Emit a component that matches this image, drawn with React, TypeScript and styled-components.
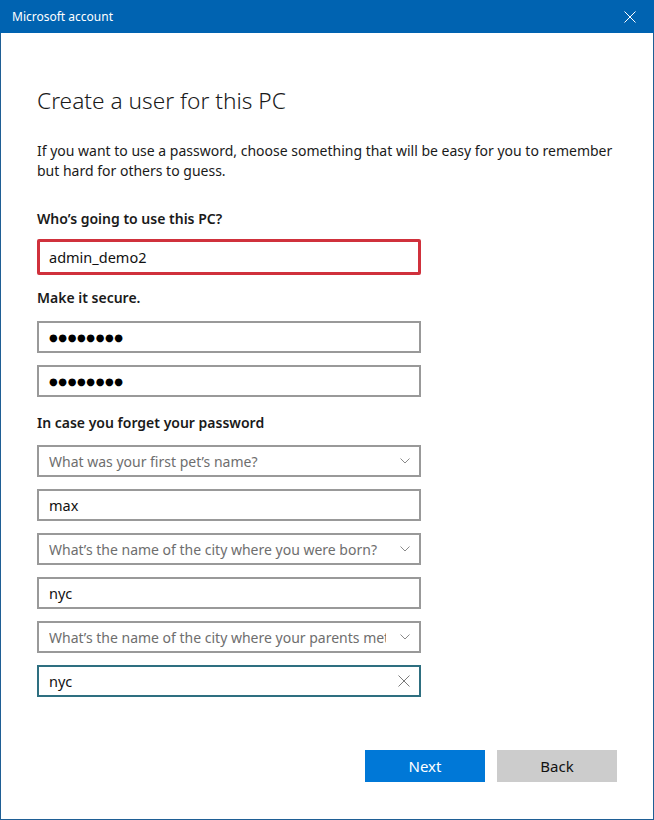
import React from "react";
import styled, { createGlobalStyle } from "styled-components";

const GlobalStyle = createGlobalStyle`
  * { box-sizing: border-box; }
  body {
    margin: 0;
    background: #ffffff;
    font-family: "Noto Sans", "Open Sans", sans-serif;
  }
`;

const Window = styled.div`
  width: 654px;
  height: 820px;
  display: flex;
  flex-direction: column;
  background: #ffffff;
  border: 1px solid #1f5f95;
  border-top: none;
`;

const TitleBar = styled.div`
  height: 33px;
  margin: 0 -1px;
  display: flex;
  align-items: center;
  justify-content: space-between;
  padding: 0 18px 0 12px;
  background: #0063b1;
  color: #ffffff;
  font-size: 12px;
`;

const CloseIcon = styled.svg`
  width: 12px;
  height: 12px;
`;

const Content = styled.div`
  flex: 1;
  display: flex;
  flex-direction: column;
  padding: 52px 36px 0 36px;
`;

const Heading = styled.h1`
  margin: 0;
  font-size: 22.7px;
  line-height: 32px;
  font-weight: 300;
  color: #1a1a1a;
`;

const Intro = styled.p`
  margin: 24px 0 0;
  width: 590px;
  font-size: 14px;
  line-height: 20px;
  color: #1a1a1a;
`;

const Label = styled.div<{ $top: number }>`
  margin-top: ${(p) => p.$top}px;
  font-size: 14px;
  line-height: 20px;
  font-weight: 600;
  color: #1a1a1a;
`;

const FieldGroup = styled.div<{ $top: number }>`
  margin-top: ${(p) => p.$top}px;
  display: flex;
  flex-direction: column;
  gap: 12px;
  width: 384px;
`;

const Field = styled.div<{ $variant?: "highlight" | "focus" }>`
  height: ${(p) => (p.$variant === "highlight" ? 36 : 32)}px;
  display: flex;
  align-items: center;
  justify-content: space-between;
  padding: 0 ${(p) => (p.$variant === "highlight" ? 10 : 9)}px 0
    ${(p) => (p.$variant === "highlight" ? 9 : 10)}px;
  border: ${(p) =>
    p.$variant === "highlight"
      ? "3px solid #d0313c"
      : p.$variant === "focus"
      ? "2px solid #2e6f80"
      : "2px solid #999999"};
  border-radius: ${(p) => (p.$variant === "highlight" ? "2px" : "0")};
  font-size: 14.5px;
  color: #111111;
  background: #ffffff;
`;

const Placeholder = styled.span`
  font-size: 14px;
  color: #6e6e6e;
  white-space: nowrap;
  overflow: hidden;
  flex: 1;
`;

const Dots = styled.span`
  font-family: "DejaVu Sans", sans-serif;
  font-size: 10px;
  letter-spacing: 0.6px;
  color: #000000;
`;

const Chevron = styled.svg`
  width: 10px;
  height: 6px;
  margin-left: 14px;
  flex-shrink: 0;
`;

const ClearIcon = styled.svg`
  width: 12px;
  height: 12px;
`;

const Actions = styled.div`
  margin-top: 53px;
  display: flex;
  justify-content: flex-end;
  gap: 12px;
`;

const Button = styled.button<{ $primary?: boolean }>`
  width: 120px;
  height: 32px;
  border: none;
  padding: 0;
  font-family: inherit;
  font-size: 15px;
  background: ${(p) => (p.$primary ? "#0078d7" : "#cccccc")};
  color: ${(p) => (p.$primary ? "#ffffff" : "#111111")};
`;

const ChevronDown = () => (
  <Chevron viewBox="0 0 10 6">
    <path d="M0.5 0.5 L5 5 L9.5 0.5" fill="none" stroke="#8a8a8a" strokeWidth="1" />
  </Chevron>
);

const Select = ({ text }: { text: string }) => (
  <Field>
    <Placeholder>{text}</Placeholder>
    <ChevronDown />
  </Field>
);

export default function App() {
  return (
    <>
      <GlobalStyle />
      <Window>
        <TitleBar>
          <span>Microsoft account</span>
          <CloseIcon viewBox="0 0 12 12">
            <path d="M0.5 0.5 L11.5 11.5 M11.5 0.5 L0.5 11.5" stroke="#ffffff" strokeWidth="1" />
          </CloseIcon>
        </TitleBar>
        <Content>
          <Heading>Create a user for this PC</Heading>
          <Intro>
            If you want to use a password, choose something that will be easy for you to remember
            but hard for others to guess.
          </Intro>
          <Label $top={28}>Who’s going to use this PC?</Label>
          <FieldGroup $top={10}>
            <Field $variant="highlight">admin_demo2</Field>
          </FieldGroup>
          <Label $top={13}>Make it secure.</Label>
          <FieldGroup $top={13}>
            <Field>
              <Dots>●●●●●●●●</Dots>
            </Field>
            <Field>
              <Dots>●●●●●●●●</Dots>
            </Field>
          </FieldGroup>
          <Label $top={16}>In case you forget your password</Label>
          <FieldGroup $top={12}>
            <Select text="What was your first pet’s name?" />
            <Field>max</Field>
            <Select text="What’s the name of the city where you were born?" />
            <Field>nyc</Field>
            <Select text="What’s the name of the city where your parents met?" />
            <Field $variant="focus">
              <span>nyc</span>
              <ClearIcon viewBox="0 0 12 12">
                <path d="M0.5 0.5 L11.5 11.5 M11.5 0.5 L0.5 11.5" stroke="#7a7a7a" strokeWidth="1" />
              </ClearIcon>
            </Field>
          </FieldGroup>
          <Actions>
            <Button $primary>Next</Button>
            <Button>Back</Button>
          </Actions>
        </Content>
      </Window>
    </>
  );
}
